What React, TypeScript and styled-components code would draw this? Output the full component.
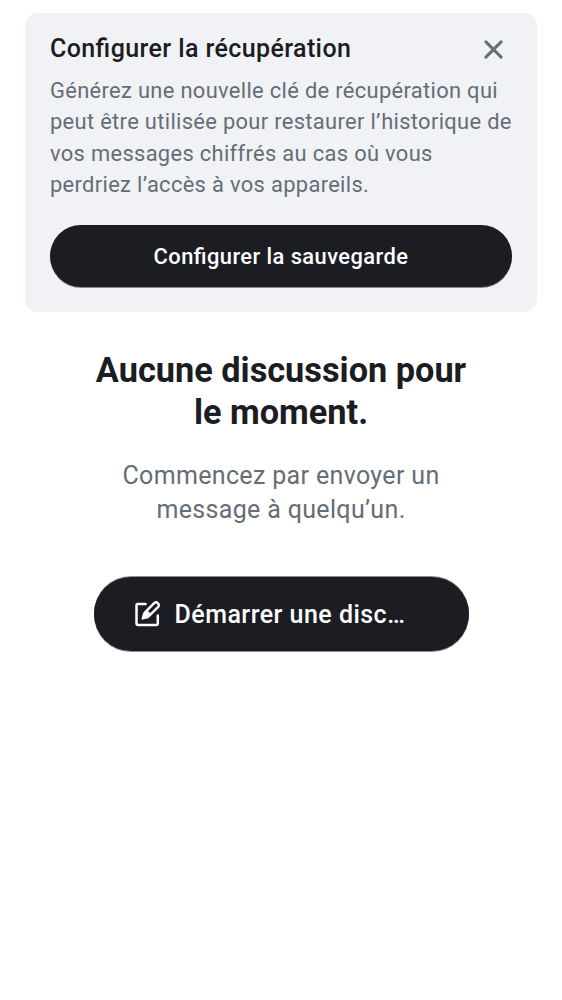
import React from "react";
import styled, { createGlobalStyle } from "styled-components";

const Global = createGlobalStyle`
  * { box-sizing: border-box; }
  body { margin: 0; background: #fff; font-family: Roboto, "Liberation Sans", sans-serif; color: #1b1d22; }
  h1, h2, p { margin: 0; }
  button { font-family: inherit; border: 0; padding: 0; cursor: pointer; }
`;
const Screen = styled.main`
  min-height: 1000px;
  padding: 12.5px 25px 0;
`;
const Banner = styled.section`
  background: #f0f2f5;
  border-radius: 12.5px;
  padding: 20px 25px 25px;
  height: 299.9px;
`;
const BannerHead = styled.div`
  display: flex;
  justify-content: space-between;
  height: 42.5px;
`;
const BannerTitle = styled.h2`
  font-size: 25px;
  font-weight: 500;
  line-height: 31px;
  letter-spacing: 0.4px;
  font-feature-settings: "liga" 1;
  white-space: nowrap;
`;
const Close = styled.button`
  display: flex;
  background: none;
  width: 37px;
  height: 35px;
  align-items: center;
  justify-content: center;
`;
const Line = styled.span`
  display: block;
  white-space: nowrap;
`;
const BannerText = styled.p`
  font-size: 21.875px;
  line-height: 31.35px;
  letter-spacing: 0.34px;
  color: #656d77;
`;
const Pill = styled.button`
  display: flex;
  align-items: center;
  justify-content: center;
  width: 100%;
  height: 62px;
  padding-top: 1px;
  border-radius: 32px;
  background: #1b1d22;
  box-shadow: 0 1px 0 rgba(27, 29, 34, 0.5);
  color: #fff;
  font-size: 21.875px;
  font-weight: 500;
  letter-spacing: 0.44px;
  font-feature-settings: "liga" 1;
`;
const StartPill = styled(Pill)`
  justify-content: flex-start;
  gap: 14px;
  width: 375px;
  height: 74px;
  padding: 0 0 0 40px;
  border-radius: 38px;
  box-shadow: 0 1px 0 rgba(27, 29, 34, 0.5), 0 -1px 0 rgba(27, 29, 34, 0.5);
  font-size: 25px;
  letter-spacing: 0.47px;
`;
const BannerAction = styled.div`
  margin-top: 24.3px;
`;
const Empty = styled.section`
  display: flex;
  flex-direction: column;
  align-items: center;
  padding-top: 36.6px;
  text-align: center;
`;
const Title = styled.h1`
  font-size: 34.3px;
  line-height: 42.2px;
  font-weight: 700;
`;
const Subtitle = styled.p`
  margin: 25.3px 0 49.5px;
  font-size: 25px;
  line-height: 34.4px;
  letter-spacing: 0.34px;
  color: #656d77;
`;

const CloseIcon = () => (
  <svg width="20" height="20" viewBox="0 0 20 20" fill="none" stroke="#656d77" strokeWidth="2.9" strokeLinecap="round">
    <path d="M1.9 1.9 17.1 17.1M17.1 1.9 1.9 17.1" />
  </svg>
);

const ComposeIcon = () => (
  <svg width="27" height="27" viewBox="0 0 27 27" fill="none" stroke="#fff" strokeWidth="2.5" strokeLinecap="round" strokeLinejoin="round">
    <path d="M11.5 3H3.7Q2.5 3 2.5 4.2V22.7Q2.5 23.9 3.7 23.9H22.6Q23.8 23.9 23.8 22.7V14.6" />
    <g transform="translate(8 18.2) rotate(-45)" strokeWidth="2.4">
      <path d="M8 -2.7H19.9Q22.4 -2.7 22.4 -.7V.7Q22.4 2.7 19.9 2.7H8Z" />
      <path d="M.8 0 5.5 -2.7H9V2.7H5.5Z" fill="#fff" strokeWidth="2" />
    </g>
  </svg>
);

export default function App() {
  return (
    <>
      <Global />
      <Screen>
        <Banner>
          <BannerHead>
            <BannerTitle>Configurer la récupération</BannerTitle>
            <Close aria-label="Fermer">
              <CloseIcon />
            </Close>
          </BannerHead>
          <BannerText>
            <Line>Générez une nouvelle clé de récupération qui</Line>
            <Line>peut être utilisée pour restaurer l’historique de</Line>
            <Line>vos messages chiffrés au cas où vous</Line>
            <Line>perdriez l’accès à vos appareils.</Line>
          </BannerText>
          <BannerAction>
            <Pill>Configurer la sauvegarde</Pill>
          </BannerAction>
        </Banner>
        <Empty>
          <Title>
            <Line>Aucune discussion pour</Line>
            <Line>le moment.</Line>
          </Title>
          <Subtitle>
            <Line>Commencez par envoyer un</Line>
            <Line>message à quelqu’un.</Line>
          </Subtitle>
          <StartPill>
            <ComposeIcon />
            <Line>Démarrer une disc…</Line>
          </StartPill>
        </Empty>
      </Screen>
    </>
  );
}
